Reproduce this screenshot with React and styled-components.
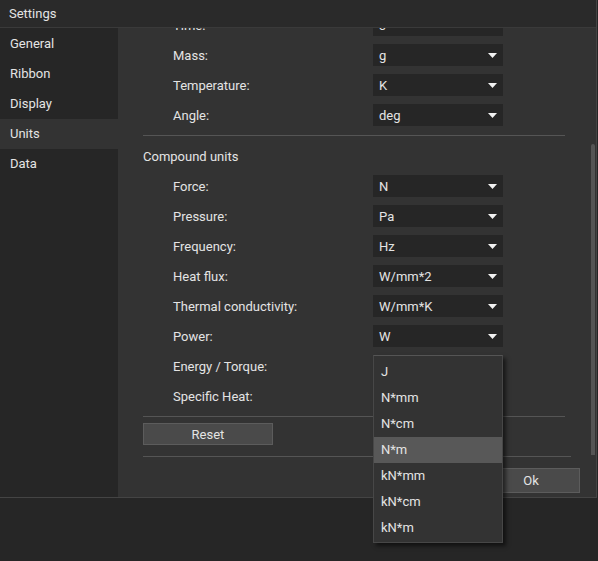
import React, { useLayoutEffect, useRef } from 'react';
import styled, { createGlobalStyle } from 'styled-components';

const GlobalStyle = createGlobalStyle`
  html, body {
    margin: 0;
    padding: 0;
    background: #262626;
    font-family: Roboto, "Liberation Sans", sans-serif;
    font-size: 13px;
    color: #e4e4e4;
  }
`;

const Page = styled.div`
  position: relative;
  width: 598px;
  height: 561px;
  background: #262626;
  overflow: hidden;
`;

const Window = styled.div`
  width: 596px;
  height: 497px;
  border-right: 1px solid #444;
  border-bottom: 1px solid #444;
  display: flex;
  flex-direction: column;
`;

const TitleBar = styled.div`
  height: 27px;
  line-height: 27px;
  padding-left: 9px;
  background: #2a2a2a;
  border-bottom: 1px solid #3a3a3a;
  flex: none;
`;

const Body = styled.div`
  flex: 1;
  display: flex;
  min-height: 0;
`;

const Sidebar = styled.div`
  width: 118px;
  padding-top: 1px;
  background: #262626;
  flex: none;
`;

const NavItem = styled.div`
  height: 30px;
  line-height: 30px;
  padding-left: 10px;
  background: ${p => (p.active ? '#333333' : 'transparent')};
`;

const Panel = styled.div`
  flex: 1;
  background: #333333;
  display: flex;
  flex-direction: column;
  position: relative;
  min-width: 0;
`;

const Viewport = styled.div`
  height: 428px;
  overflow: hidden;
  position: relative;
`;

const ScrollContent = styled.div`
  padding: 8px 31px 11px 25px;
`;

const Heading = styled.div`
  padding: 13px 0 6px;
  line-height: 16px;
`;

const Row = styled.div`
  height: 30px;
  display: flex;
  align-items: center;
  padding-left: 30px;
`;

const Label = styled.div`
  width: 200px;
  flex: none;
`;

const Combo = styled.div`
  width: 130px;
  height: 22px;
  background: #262626;
  display: flex;
  align-items: center;
  justify-content: space-between;
  padding: 0 6px;
  box-sizing: border-box;
`;

const Separator = styled.div`
  height: 1px;
  background: #555;
  margin-top: ${p => p.top || 0}px;
`;

const Button = styled.div`
  width: ${p => p.w}px;
  height: ${p => p.h}px;
  box-sizing: border-box;
  background: #4a4a4a;
  border: 1px solid #5c5c5c;
  display: flex;
  align-items: center;
  justify-content: center;
  margin-top: ${p => p.top || 0}px;
`;

const Thumb = styled.div`
  position: absolute;
  right: 1px;
  top: 116px;
  width: 4px;
  height: 311px;
  background: #555;
  border-radius: 2px 2px 0 0;
`;

const Footer = styled.div`
  flex: 1;
  display: flex;
  flex-direction: column;
`;

const FooterLine = styled.div`
  height: 1px;
  background: #555;
  margin: 0 25px;
`;

const FooterButtons = styled.div`
  display: flex;
  justify-content: flex-end;
  padding: 11px 16px 0 0;
`;

const Popup = styled.div`
  position: absolute;
  left: 373px;
  top: 355px;
  width: 130px;
  box-sizing: border-box;
  background: #333333;
  border: 1px solid #474747;
  border-top-color: #555;
  padding: 3px 0 1px;
  box-shadow: 3px 3px 4px rgba(0, 0, 0, 0.55);
`;

const Option = styled.div`
  height: 26px;
  line-height: 26px;
  padding-left: 7px;
  background: ${p => (p.selected ? '#585858' : 'transparent')};
`;

const Arrow = () => (
  <svg width="9" height="5" viewBox="0 0 9 5">
    <polygon points="0,0 9,0 4.5,5" fill="#f2f2f2" />
  </svg>
);

const Dropdown = ({ value }) => (
  <Combo>
    <span>{value}</span>
    <Arrow />
  </Combo>
);

const baseUnits = [
  ['Length:', 'mm'],
  ['Time:', 's'],
  ['Mass:', 'g'],
  ['Temperature:', 'K'],
  ['Angle:', 'deg'],
];

const compoundUnits = [
  ['Force:', 'N'],
  ['Pressure:', 'Pa'],
  ['Frequency:', 'Hz'],
  ['Heat flux:', 'W/mm*2'],
  ['Thermal conductivity:', 'W/mm*K'],
  ['Power:', 'W'],
  ['Energy / Torque:', 'J'],
  ['Specific Heat:', 'J/kg*K'],
];

const energyOptions = ['J', 'N*mm', 'N*cm', 'N*m', 'kN*mm', 'kN*cm', 'kN*m'];

const navItems = ['General', 'Ribbon', 'Display', 'Units', 'Data'];

export default function App() {
  const viewportRef = useRef(null);

  useLayoutEffect(() => {
    if (viewportRef.current) viewportRef.current.scrollTop = 91;
  }, []);

  return (
    <Page>
      <GlobalStyle />
      <Window>
        <TitleBar>Settings</TitleBar>
        <Body>
          <Sidebar>
            {navItems.map(item => (
              <NavItem key={item} active={item === 'Units'}>{item}</NavItem>
            ))}
          </Sidebar>
          <Panel>
            <Viewport ref={viewportRef}>
              <ScrollContent>
                <Heading>Base units</Heading>
                {baseUnits.map(([label, value]) => (
                  <Row key={label}>
                    <Label>{label}</Label>
                    <Dropdown value={value} />
                  </Row>
                ))}
                <Separator top={5} />
                <Heading>Compound units</Heading>
                {compoundUnits.map(([label, value]) => (
                  <Row key={label}>
                    <Label>{label}</Label>
                    <Dropdown value={value} />
                  </Row>
                ))}
                <Separator top={5} />
                <Button w={130} h={22} top={6}>Reset</Button>
              </ScrollContent>
            </Viewport>
            <Thumb />
            <Footer>
              <FooterLine />
              <FooterButtons>
                <Button w={98} h={25}>Ok</Button>
              </FooterButtons>
            </Footer>
          </Panel>
        </Body>
      </Window>
      <Popup>
        {energyOptions.map(opt => (
          <Option key={opt} selected={opt === 'N*m'}>{opt}</Option>
        ))}
      </Popup>
    </Page>
  );
}
